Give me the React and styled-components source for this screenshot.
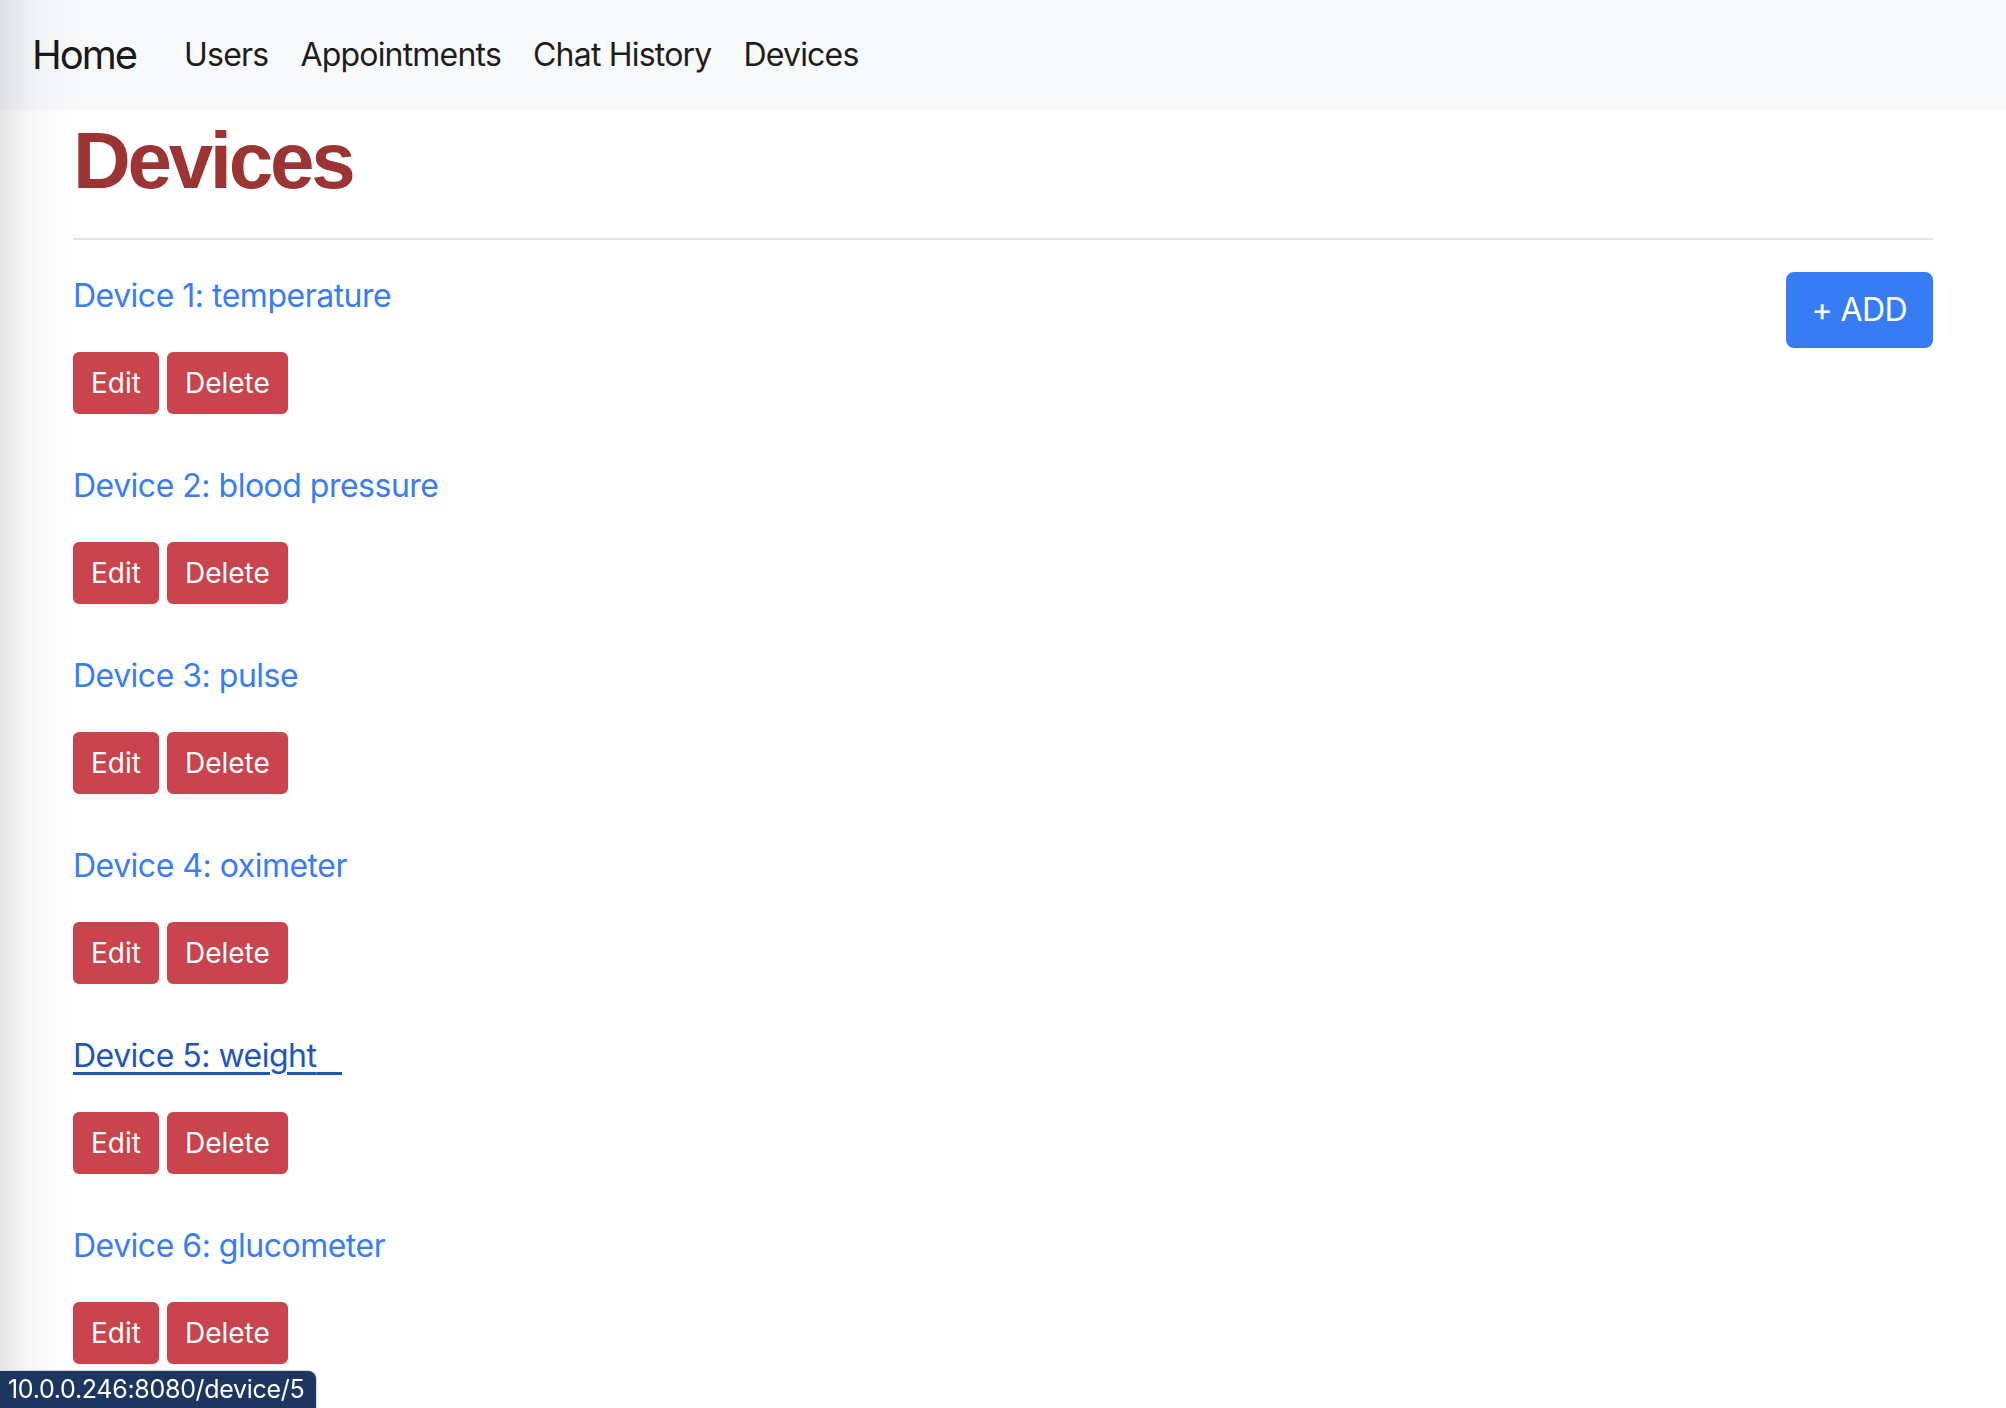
import React from "react";
import styled, { createGlobalStyle } from "styled-components";

const Global = createGlobalStyle`
  html, body { margin: 0; padding: 0; background: #ffffff; }
  body {
    font-family: Inter, "Noto Sans", "Liberation Sans", sans-serif;
    font-size: 32px;
    line-height: 1.5;
    color: #212529;
    letter-spacing: -0.5px;
  }
  * { box-sizing: border-box; }
`;

const Navbar = styled.nav`
  display: flex;
  align-items: center;
  height: 110px;
  padding: 0 32px;
  background: #f8f9fa;
`;

const Brand = styled.a`
  font-size: 40px;
  line-height: 60px;
  letter-spacing: -2px;
  color: #1a1a1a;
  text-decoration: none;
  margin-right: 32px;
`;

const NavLinks = styled.div`
  display: flex;
  align-items: center;
`;

const NavLink = styled.a`
  font-size: 32px;
  line-height: 48px;
  letter-spacing: -0.8px;
  padding: 0 16px;
  color: #1d1d1d;
  text-decoration: none;
`;

const Container = styled.main`
  width: 1920px;
  max-width: 100%;
  padding: 0 30px;
  margin-left: 43px;
`;

const Title = styled.h1`
  font-family: "Liberation Sans", Arial, sans-serif;
  font-weight: 700;
  font-size: 80px;
  line-height: 96px;
  color: #9d3434;
  margin: 3px 0 29px;
  letter-spacing: -3.3px;
`;

const Rule = styled.hr`
  border: 0;
  border-top: 2px solid #e5e5e5;
  margin: 0 0 32px;
`;

const AddButton = styled.button`
  float: right;
  font-family: Inter, "Noto Sans", sans-serif;
  font-size: 32px;
  line-height: 48px;
  letter-spacing: -0.6px;
  padding: 12px 24px;
  border: 2px solid #387cf3;
  border-radius: 8px;
  background: #387cf3;
  color: #ffffff;
  cursor: pointer;
`;

const DeviceItem = styled.div`
  margin-bottom: 48px;
`;

const DeviceLink = styled.a`
  display: inline-block;
  font-size: 32px;
  line-height: 48px;
  margin-bottom: 32px;
  color: ${(p) => (p.$hover ? "#2256b6" : "#3a7cf1")};
  text-decoration: ${(p) => (p.$hover ? "underline" : "none")};
  text-decoration-thickness: 3px;
  text-underline-offset: 5px;
`;

const ButtonRow = styled.div`
  display: flex;
  gap: 8px;
`;

const DangerButton = styled.button`
  font-family: Inter, "Noto Sans", sans-serif;
  font-size: 28px;
  line-height: 42px;
  letter-spacing: 0;
  padding: 8px 16px;
  border: 2px solid #c9444c;
  border-radius: 6px;
  background: #c9444c;
  color: #ffffff;
  cursor: pointer;
`;

const EdgeShadow = styled.div`
  position: fixed;
  top: 0;
  left: 0;
  bottom: 0;
  width: 80px;
  pointer-events: none;
  background: linear-gradient(
    to right,
    rgba(0, 0, 0, 0.1),
    rgba(0, 0, 0, 0.04) 25px,
    rgba(0, 0, 0, 0.01) 50px,
    rgba(0, 0, 0, 0) 80px
  );
`;

const StatusBar = styled.div`
  position: fixed;
  left: 0;
  bottom: 0;
  height: 37px;
  padding: 0 12px 0 8px;
  background: #1c3660;
  color: #ffffff;
  font-family: Inter, "Noto Sans", sans-serif;
  font-size: 25px;
  line-height: 36px;
  letter-spacing: -0.3px;
  border-top-right-radius: 8px;
  box-shadow: 0 -1px 0 #d6d6d6, 1px 0 0 #d6d6d6;
`;

const devices = [
  { id: 1, name: "temperature" },
  { id: 2, name: "blood pressure" },
  { id: 3, name: "pulse" },
  { id: 4, name: "oximeter" },
  { id: 5, name: "weight", hover: true },
  { id: 6, name: "glucometer" },
];

export default function App() {
  return (
    <>
      <Global />
      <Navbar>
        <Brand href="#">Home</Brand>
        <NavLinks>
          <NavLink href="#">Users</NavLink>
          <NavLink href="#">Appointments</NavLink>
          <NavLink href="#">Chat History</NavLink>
          <NavLink href="#">Devices</NavLink>
        </NavLinks>
      </Navbar>
      <Container>
        <Title>Devices</Title>
        <Rule />
        <AddButton>+ ADD</AddButton>
        {devices.map((d) => (
          <DeviceItem key={d.id}>
            <DeviceLink href="#" $hover={d.hover}>
              {`Device ${d.id}: ${d.name}`}
              {d.hover ? "\u00a0\u00a0\u00a0" : ""}
            </DeviceLink>
            <ButtonRow>
              <DangerButton>Edit</DangerButton>
              <DangerButton>Delete</DangerButton>
            </ButtonRow>
          </DeviceItem>
        ))}
      </Container>
      <EdgeShadow />
      <StatusBar>10.0.0.246:8080/device/5</StatusBar>
    </>
  );
}
